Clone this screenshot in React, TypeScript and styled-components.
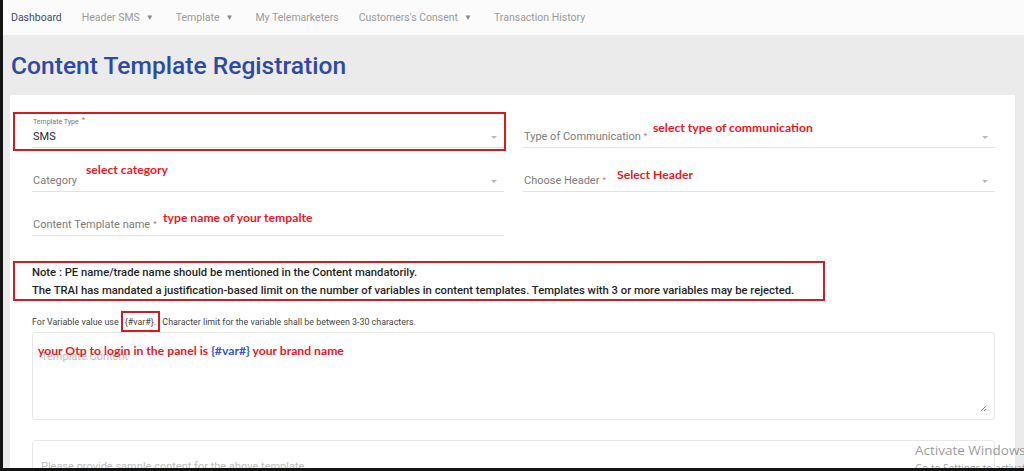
import React from 'react';
import styled, { createGlobalStyle } from 'styled-components';

const GlobalStyle = createGlobalStyle`
  html, body { margin: 0; padding: 0; background: #ebebeb; }
  * { box-sizing: border-box; }
`;

const Frame = styled.div`
  position: relative;
  width: 1024px;
  height: 471px;
  overflow: hidden;
  background: #ebebeb;
  border-left: 3px solid #141414;
  border-bottom: 3px solid #141414;
  font-family: Roboto, 'Liberation Sans', sans-serif;
  display: flex;
  flex-direction: column;
`;

const Nav = styled.nav`
  height: 35px;
  flex-shrink: 0;
  background: #fbfbfb;
  display: flex;
  align-items: center;
  padding-left: 8px;
  gap: 20px;
  font-size: 10.5px;
`;

const NavItem = styled.span<{ $active?: boolean }>`
  color: ${(p) => (p.$active ? '#474b6b' : '#9a9a9a')};
  display: flex;
  align-items: center;
  gap: 6px;
`;

const Caret = styled.span`
  font-size: 8px;
  color: #8a8a8a;
  margin-right: 2px;
`;

const Main = styled.main`
  flex: 1;
  padding: 0 9px 0 7px;
  display: flex;
  flex-direction: column;
  min-height: 0;
`;

const Title = styled.h1`
  margin: 0;
  height: 60px;
  flex-shrink: 0;
  display: flex;
  align-items: center;
  padding: 1px 0 0 1px;
  font-size: 24.6px;
  font-weight: 500;
  color: #2d4a9e;
`;

const Card = styled.section`
  flex: 1;
  min-height: 0;
  background: #fff;
  padding: 23px 20px 0 22px;
  display: flex;
  flex-direction: column;
`;

const Grid = styled.div`
  display: grid;
  grid-template-columns: 472px 472px;
  column-gap: 19px;
  row-gap: 14px;
`;

const Field = styled.div`
  position: relative;
  height: 30px;
  border-bottom: 1px solid #e2e2e2;
  display: flex;
  flex-direction: column;
  justify-content: flex-end;
  padding: 0 0 4px 1px;
`;

const SmallLabel = styled.div`
  font-size: 7px;
  color: #777;
  margin-bottom: 4px;
`;

const Value = styled.div`
  font-size: 11px;
  color: #2a2a2a;
`;

const Placeholder = styled.div`
  font-size: 11px;
  color: #7c7c7c;
`;

const Star = styled.span`
  color: #c66;
  font-size: 8px;
  margin-left: 3px;
  vertical-align: 2px;
`;

const Arrow = styled.span`
  position: absolute;
  right: 7px;
  bottom: 8px;
  width: 0;
  height: 0;
  border-left: 3px solid transparent;
  border-right: 3px solid transparent;
  border-top: 3px solid #b8b8b8;
`;

const HighlightBox = styled.div`
  position: absolute;
  left: -19px;
  right: -2px;
  top: -6px;
  bottom: -4px;
  border: 2px solid #d51a22;
  pointer-events: none;
`;

const Annotation = styled.span<{ $left: number; $top: number }>`
  position: absolute;
  left: ${(p) => p.$left}px;
  top: ${(p) => p.$top}px;
  font-family: Lato, 'Open Sans', sans-serif;
  font-weight: 700;
  font-size: 12.2px;
  color: #f0141e;
  white-space: nowrap;
`;

const Note = styled.div`
  margin: 25px 0 0 -19px;
  width: 812px;
  height: 40px;
  flex-shrink: 0;
  border: 2px solid #d51a22;
  padding: 1px 0 0 17px;
  font-size: 11.25px;
  font-weight: 500;
  color: #1f1f1f;
  line-height: 18px;
`;

const Hint = styled.div`
  margin-top: 10px;
  height: 21px;
  flex-shrink: 0;
  display: flex;
  align-items: center;
  font-size: 8.9px;
  color: #444;
  white-space: pre;
`;

const VarBox = styled.span`
  border: 2px solid #d51a22;
  height: 21px;
  display: inline-flex;
  align-items: center;
  padding: 0 2px;
`;

const TextBox = styled.div<{ $height: number }>`
  position: relative;
  height: ${(p) => p.$height}px;
  flex-shrink: 0;
  border: 1px solid #e8e8e8;
  border-radius: 3px;
  padding: 17px 8px;
  font-size: 11px;
  color: #bdbdbd;
`;

const SampleBox = styled(TextBox)`
  margin-top: 20px;
  padding-top: 19px;
`;

const Written = styled.span`
  position: absolute;
  left: 5px;
  top: 10px;
  font-family: Lato, 'Open Sans', sans-serif;
  font-weight: 700;
  font-size: 12.2px;
  color: #f0141e;
  white-space: nowrap;
`;

const VarText = styled.span`
  color: #3a4fe4;
`;

const Resize = styled.svg`
  position: absolute;
  right: 7px;
  bottom: 7px;
`;

const Watermark = styled.div`
  position: absolute;
  left: 912px;
  top: 444px;
  font-family: 'Open Sans', 'Noto Sans', sans-serif;
  color: rgba(120, 120, 120, 0.75);
  line-height: 1;
`;

const WatermarkTitle = styled.div`
  font-size: 13.5px;
`;

const WatermarkSub = styled.div`
  font-size: 10px;
  margin-top: 5px;
  white-space: nowrap;
`;

export default function App() {
  return (
    <>
      <GlobalStyle />
      <Frame>
        <Nav>
          <NavItem $active>Dashboard</NavItem>
          <NavItem>Header SMS <Caret>▼</Caret></NavItem>
          <NavItem>Template <Caret>▼</Caret></NavItem>
          <NavItem>My Telemarketers</NavItem>
          <NavItem>Customers's Consent <Caret>▼</Caret></NavItem>
          <NavItem>Transaction History</NavItem>
        </Nav>
        <Main>
          <Title>Content Template Registration</Title>
          <Card>
            <Grid>
              <Field>
                <HighlightBox />
                <SmallLabel>Template Type<Star>*</Star></SmallLabel>
                <Value>SMS</Value>
                <Arrow />
              </Field>
              <Field>
                <Placeholder>Type of Communication<Star>*</Star></Placeholder>
                <Arrow />
                <Annotation $left={130} $top={2}>select type of communication</Annotation>
              </Field>
              <Field>
                <Placeholder>Category</Placeholder>
                <Arrow />
                <Annotation $left={54} $top={0}>select category</Annotation>
              </Field>
              <Field>
                <Placeholder>Choose Header<Star>*</Star></Placeholder>
                <Arrow />
                <Annotation $left={94} $top={5}>Select Header</Annotation>
              </Field>
              <Field>
                <Placeholder>Content Template name<Star>*</Star></Placeholder>
                <Annotation $left={131} $top={4}>type name of your tempalte</Annotation>
              </Field>
            </Grid>
            <Note>
              <div>Note : PE name/trade name should be mentioned in the Content mandatorily.</div>
              <div>
                The TRAI has mandated a justification-based limit on the number of variables in content
                templates. Templates with 3 or more variables may be rejected.
              </div>
            </Note>
            <Hint>
              For Variable value use <VarBox>{'{#var#}.'}</VarBox> Character limit for the variable shall be between 3-30 characters.
            </Hint>
            <TextBox $height={88}>
              Template Content
              <Written>
                your Otp to login in the panel is <VarText>{'{#var#}'}</VarText> your brand name
              </Written>
              <Resize width="7" height="7" viewBox="0 0 7 7">
                <path d="M6 1 L1 6 M6 4 L4 6" stroke="#888" strokeWidth="0.9" />
              </Resize>
            </TextBox>
            <SampleBox $height={60}>Please provide sample content for the above template</SampleBox>
          </Card>
        </Main>
        <Watermark>
          <WatermarkTitle>Activate Windows</WatermarkTitle>
          <WatermarkSub>Go to Settings to activate Windows.</WatermarkSub>
        </Watermark>
      </Frame>
    </>
  );
}
